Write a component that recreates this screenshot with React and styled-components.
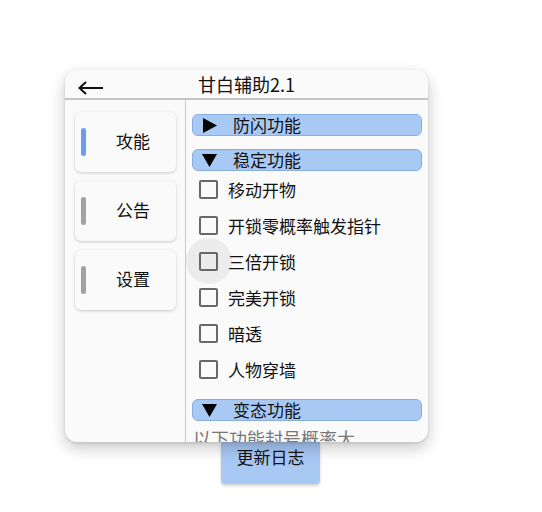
import React from "react";
import styled, { createGlobalStyle } from "styled-components";

const Global = createGlobalStyle`
  html, body { margin: 0; padding: 0; background: #ffffff; }
  body { font-family: "Noto Sans CJK SC", "Noto Sans", sans-serif; color: #1a1a1a; }
`;

const Page = styled.div`
  width: 542px;
  height: 512px;
  display: flex;
  flex-direction: column;
  padding-top: 70px;
  box-sizing: border-box;
  overflow: hidden;
`;

const Panel = styled.div`
  position: relative;
  z-index: 1;
  margin-left: 65px;
  width: 363px;
  height: 372px;
  background: #fafafa;
  border-radius: 12px;
  box-shadow: 0 6px 16px rgba(0, 0, 0, 0.22), 0 1px 3px rgba(0, 0, 0, 0.12);
  display: flex;
  flex-direction: column;
  overflow: hidden;
`;

const Header = styled.div`
  height: 28px;
  border-bottom: 2px solid #c4c4c4;
  display: flex;
  align-items: center;
  justify-content: center;
  position: relative;
  flex-shrink: 0;
`;

const Back = styled.svg`
  position: absolute;
  left: 13px;
  top: 11px;
`;

const Title = styled.div`
  font-size: 18px;
  line-height: 28px;
  color: #111;
`;

const Body = styled.div`
  flex: 1;
  display: flex;
  min-height: 0;
`;

const Sidebar = styled.div`
  width: 121px;
  border-right: 1px solid #c8c8c8;
  display: flex;
  flex-direction: column;
  gap: 9px;
  padding: 12px 0 0 10px;
  box-sizing: border-box;
  flex-shrink: 0;
`;

const Card = styled.div`
  width: 101px;
  height: 60px;
  background: #fafafa;
  border-radius: 6px;
  box-shadow: 0 1px 3px rgba(0, 0, 0, 0.2);
  display: flex;
  align-items: center;
  padding-left: 6px;
  box-sizing: border-box;
`;

const Indicator = styled.div`
  width: 5px;
  height: 28px;
  border-radius: 3px;
  background: ${(p) => (p.$active ? "#6c9cf0" : "#a2a2a2")};
`;

const CardLabel = styled.div`
  margin-left: 30px;
  margin-bottom: 4px;
  font-size: 17px;
  color: #111;
`;

const Content = styled.div`
  flex: 1;
  padding: 14px 6px 0 6px;
  display: flex;
  flex-direction: column;
  overflow: hidden;
`;

const Section = styled.div`
  height: 22px;
  background: #a9c9f5;
  border: 1px solid #88aee0;
  border-radius: 6px;
  display: flex;
  align-items: center;
  box-sizing: border-box;
  flex-shrink: 0;
  margin-top: ${(p) => p.$mt || 0}px;
`;

const Tri = styled.svg`
  margin-left: 9px;
  margin-right: 16px;
  flex-shrink: 0;
`;

const SectionText = styled.span`
  font-size: 17px;
  line-height: 20px;
  color: #111;
`;

const List = styled.div`
  display: flex;
  flex-direction: column;
`;

const Row = styled.div`
  height: 36px;
  display: flex;
  align-items: center;
  padding-left: 7px;
  position: relative;
`;

const Ripple = styled.div`
  position: absolute;
  left: -6px;
  top: -5px;
  width: 46px;
  height: 46px;
  border-radius: 50%;
  background: #ececec;
`;

const Box = styled.div`
  position: relative;
  width: 19px;
  height: 19px;
  border: 2px solid #686868;
  border-radius: 2px;
  box-sizing: border-box;
`;

const RowText = styled.span`
  position: relative;
  margin-left: 10px;
  font-size: 17px;
  color: #111;
`;

const Note = styled.div`
  margin-top: 6px;
  padding-left: 1px;
  font-size: 18px;
  line-height: 22px;
  color: #777;
  white-space: nowrap;
`;

const LogButton = styled.div`
  margin-left: 221px;
  width: 99px;
  height: 42px;
  background: #a9c9f5;
  border-radius: 0 0 4px 4px;
  box-shadow: 0 2px 3px rgba(0, 0, 0, 0.18);
  display: flex;
  align-items: center;
  justify-content: center;
  font-size: 17px;
  color: #111;
  padding-bottom: 14px;
  box-sizing: border-box;
`;

const tabs = [
  { label: "攻能", active: true },
  { label: "公告" },
  { label: "设置" },
];

const items = ["移动开物", "开锁零概率触发指针", "三倍开锁", "完美开锁", "暗透", "人物穿墙"];

function Triangle({ open }) {
  return (
    <Tri width="15" height="15" viewBox="0 0 15 15">
      {open ? (
        <polygon points="0,1 15,1 7.5,14" fill="#000" />
      ) : (
        <polygon points="1,0 15,7.5 1,15" fill="#000" />
      )}
    </Tri>
  );
}

export default function App() {
  return (
    <Page>
      <Global />
      <Panel>
        <Header>
          <Back width="26" height="14" viewBox="0 0 26 14">
            <line x1="1.5" y1="7" x2="25" y2="7" stroke="#111" strokeWidth="2" />
            <polyline points="8,1 1.5,7 8,13" fill="none" stroke="#111" strokeWidth="2" />
          </Back>
          <Title>甘白辅助2.1</Title>
        </Header>
        <Body>
          <Sidebar>
            {tabs.map((t) => (
              <Card key={t.label}>
                <Indicator $active={t.active} />
                <CardLabel>{t.label}</CardLabel>
              </Card>
            ))}
          </Sidebar>
          <Content>
            <Section>
              <Triangle />
              <SectionText>防闪功能</SectionText>
            </Section>
            <Section $mt={13}>
              <Triangle open />
              <SectionText>稳定功能</SectionText>
            </Section>
            <List>
              {items.map((it, i) => (
                <Row key={it}>
                  {i === 2 && <Ripple />}
                  <Box />
                  <RowText>{it}</RowText>
                </Row>
              ))}
            </List>
            <Section $mt={12}>
              <Triangle open />
              <SectionText>变态功能</SectionText>
            </Section>
            <Note>以下功能封号概率大</Note>
          </Content>
        </Body>
      </Panel>
      <LogButton>更新日志</LogButton>
    </Page>
  );
}
